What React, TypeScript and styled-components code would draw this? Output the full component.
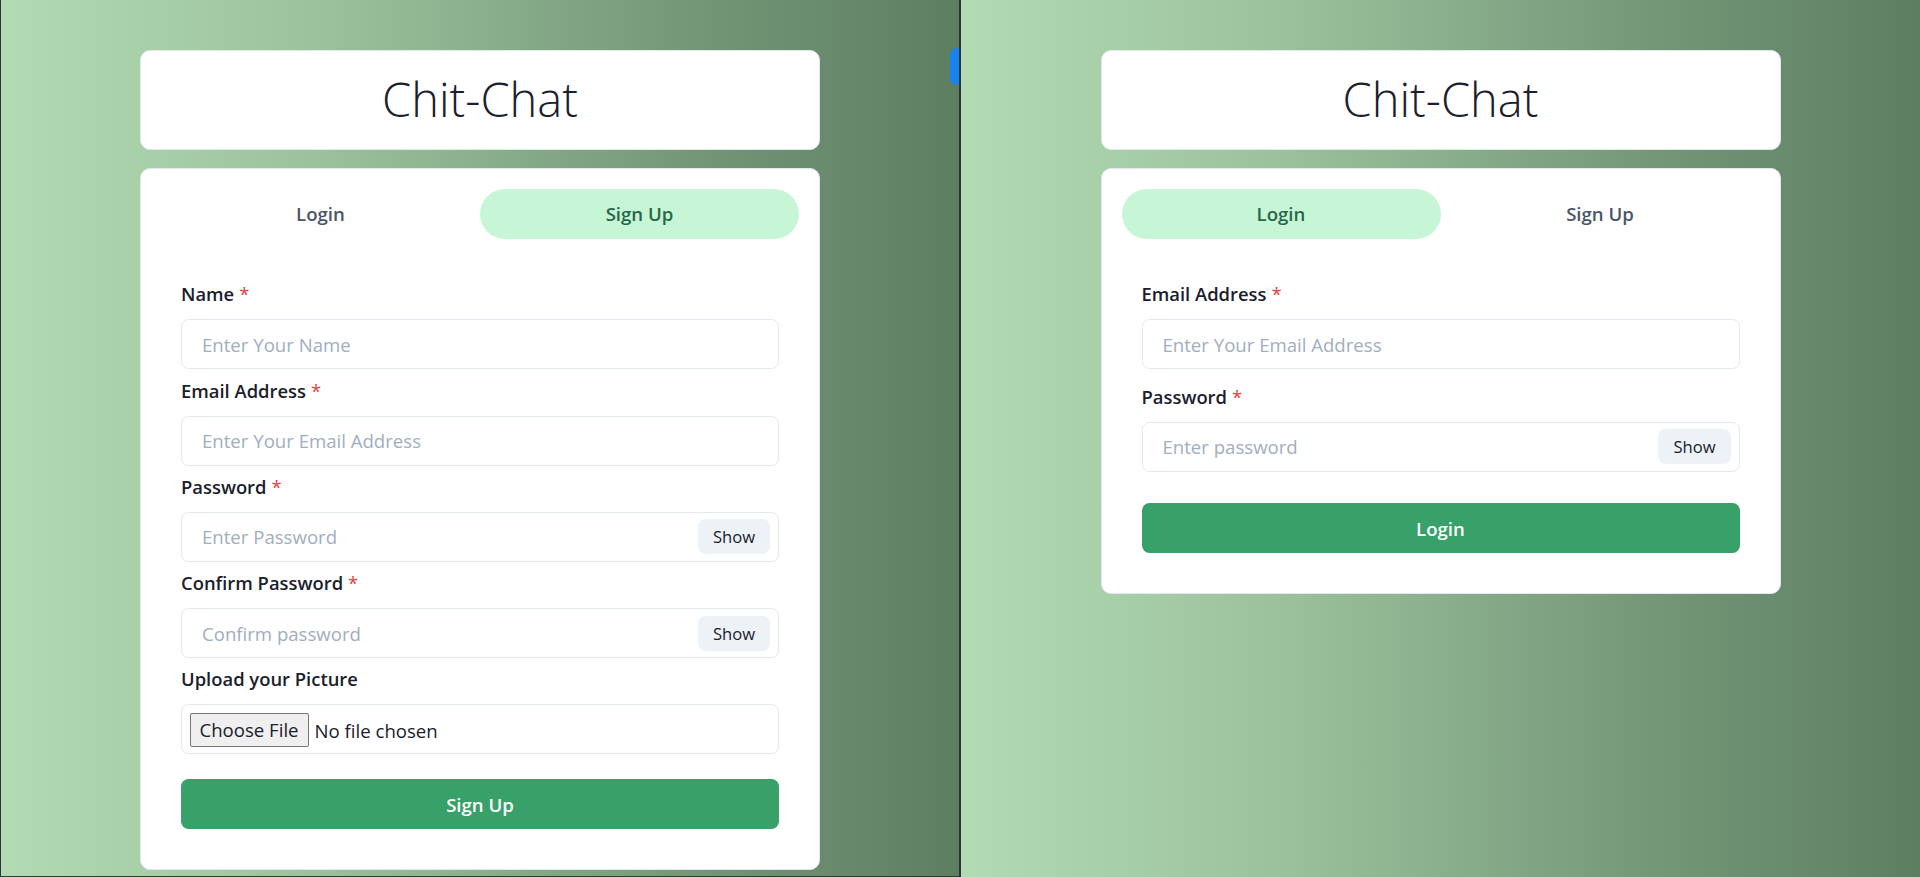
import React from "react";
import styled, { createGlobalStyle } from "styled-components";

const Global = createGlobalStyle`
  html, body { margin: 0; padding: 0; }
  body {
    font-family: "Open Sans", "Noto Sans", sans-serif;
    color: #1a202c;
    overflow: hidden;
  }
  * { box-sizing: border-box; }
`;

const Screen = styled.div`
  display: flex;
  width: 1920px;
  height: 877px;
  background: #2e3136;
`;

const Panel = styled.section<{ $edge?: boolean }>`
  position: relative;
  width: 959px;
  height: 877px;
  display: flex;
  justify-content: center;
  background: linear-gradient(to right, #b2dbb3 0%, #99c09a 35%, #76997a 70%, #5e7e61 100%);
  ${(p) => (p.$edge ? "border-left: 1px solid #2f323a; border-bottom: 1px solid #3a3630;" : "")}
`;

const Divider = styled.div`
  width: 2px;
  height: 877px;
  background: #2f3236;
`;

const SideTab = styled.div`
  position: absolute;
  right: 0;
  top: 48px;
  width: 9px;
  height: 37px;
  border-radius: 7px 0 0 7px;
  background: #1683f0;
`;

const Container = styled.div`
  width: 720px;
  padding: 0 20px;
  display: flex;
  flex-direction: column;
  align-items: center;
`;

const HeaderCard = styled.div`
  width: 100%;
  margin: 50px 0 18.75px;
  padding: 15px;
  background: #ffffff;
  border: 1px solid #e2e8f0;
  border-radius: 10px;
  display: flex;
  justify-content: center;
`;

const Title = styled.h1`
  margin: 0;
  font-family: "Open Sans", sans-serif;
  font-weight: 300;
  font-size: 47px;
  line-height: 67.5px;
  color: #1a202c;
`;

const MainCard = styled.div`
  width: 100%;
  padding: 20px;
  background: #ffffff;
  border: 1px solid #e2e8f0;
  border-radius: 10px;
`;

const TabList = styled.div`
  display: flex;
  margin-bottom: 20px;
`;

const Tab = styled.button<{ $active?: boolean }>`
  flex: 1;
  height: 50px;
  border: none;
  border-radius: 9999px;
  font-family: inherit;
  font-weight: 600;
  font-size: 18.6px;
  line-height: 30px;
  cursor: pointer;
  color: ${(p) => (p.$active ? "#276749" : "#4a5568")};
  background: ${(p) => (p.$active ? "#c6f6d5" : "transparent")};
`;

const TabPanel = styled.div`
  padding: 20px;
`;

const Form = styled.form<{ $gap: number }>`
  display: flex;
  flex-direction: column;
  gap: ${(p) => p.$gap}px;
`;

const Field = styled.div`
  display: flex;
  flex-direction: column;
`;

const Label = styled.label`
  font-weight: 600;
  font-size: 18.4px;
  line-height: 30px;
  margin-bottom: 10px;
  color: #1a202c;
`;

const Req = styled.span`
  margin-left: 5px;
  font-weight: 400;
  color: #e53e3e;
`;

const InputGroup = styled.div`
  position: relative;
  width: 100%;
`;

const TextInput = styled.input<{ $withButton?: boolean }>`
  width: 100%;
  height: 50px;
  padding: 0 ${(p) => (p.$withButton ? "90px" : "20px")} 0 20px;
  border: 1px solid #e2e8f0;
  border-radius: 7.5px;
  font-family: inherit;
  font-size: 18.6px;
  color: #1a202c;
  background: #ffffff;
  outline: none;
  &::placeholder {
    color: #a0aec0;
    opacity: 1;
  }
`;

const FileInput = styled.input`
  width: 100%;
  height: 50px;
  padding: 7.5px;
  border: 1px solid #e2e8f0;
  border-radius: 7.5px;
  font-family: inherit;
  font-size: 18.6px;
  line-height: 33px;
  color: #1a202c;
  background: #ffffff;
  &::file-selector-button {
    height: 34px;
    margin-right: 6px;
    padding: 0 9px;
    font-family: inherit;
    font-size: 18.6px;
    color: #1a202c;
    background: #efefef;
    border: 1px solid #767676;
    border-radius: 2px;
  }
`;

const RightElement = styled.div`
  position: absolute;
  top: 0;
  right: 0;
  width: 90px;
  height: 50px;
  display: flex;
  align-items: center;
  justify-content: center;
`;

const ShowButton = styled.button`
  height: 35px;
  padding: 0 15px;
  border: none;
  border-radius: 7.5px;
  background: #edf2f7;
  font-family: inherit;
  font-weight: 500;
  font-size: 16.6px;
  color: #1a202c;
  cursor: pointer;
`;

const SubmitButton = styled.button`
  margin-top: 18.75px;
  width: 100%;
  height: 50px;
  border: none;
  border-radius: 7.5px;
  background: #38a169;
  color: #ffffff;
  font-family: inherit;
  font-weight: 600;
  font-size: 18.6px;
  cursor: pointer;
`;

const RequiredLabel: React.FC<{ text: string }> = ({ text }) => (
  <Label>
    {text}
    <Req>*</Req>
  </Label>
);

const TextField: React.FC<{ label: string; placeholder: string; type?: string; show?: boolean }> = ({
  label,
  placeholder,
  type = "text",
  show,
}) => (
  <Field>
    <RequiredLabel text={label} />
    <InputGroup>
      <TextInput type={type} placeholder={placeholder} $withButton={show} />
      {show && (
        <RightElement>
          <ShowButton type="button">Show</ShowButton>
        </RightElement>
      )}
    </InputGroup>
  </Field>
);

const Header = () => (
  <HeaderCard>
    <Title>Chit-Chat</Title>
  </HeaderCard>
);

const SignUpView = () => (
  <Panel $edge>
    <Container>
      <Header />
      <MainCard>
        <TabList>
          <Tab>Login</Tab>
          <Tab $active>Sign Up</Tab>
        </TabList>
        <TabPanel>
          <Form $gap={6.25} onSubmit={(e) => e.preventDefault()}>
            <TextField label="Name" placeholder="Enter Your Name" />
            <TextField label="Email Address" placeholder="Enter Your Email Address" type="email" />
            <TextField label="Password" placeholder="Enter Password" type="password" show />
            <TextField label="Confirm Password" placeholder="Confirm password" type="password" show />
            <Field>
              <Label>Upload your Picture</Label>
              <FileInput type="file" accept="image/*" />
            </Field>
            <SubmitButton type="submit">Sign Up</SubmitButton>
          </Form>
        </TabPanel>
      </MainCard>
    </Container>
    <SideTab />
  </Panel>
);

const LoginView = () => (
  <Panel>
    <Container>
      <Header />
      <MainCard>
        <TabList>
          <Tab $active>Login</Tab>
          <Tab>Sign Up</Tab>
        </TabList>
        <TabPanel>
          <Form $gap={12.5} onSubmit={(e) => e.preventDefault()}>
            <TextField label="Email Address" placeholder="Enter Your Email Address" type="email" />
            <TextField label="Password" placeholder="Enter password" type="password" show />
            <SubmitButton type="submit">Login</SubmitButton>
          </Form>
        </TabPanel>
      </MainCard>
    </Container>
  </Panel>
);

export default function App() {
  return (
    <>
      <Global />
      <Screen>
        <SignUpView />
        <Divider />
        <LoginView />
      </Screen>
    </>
  );
}
